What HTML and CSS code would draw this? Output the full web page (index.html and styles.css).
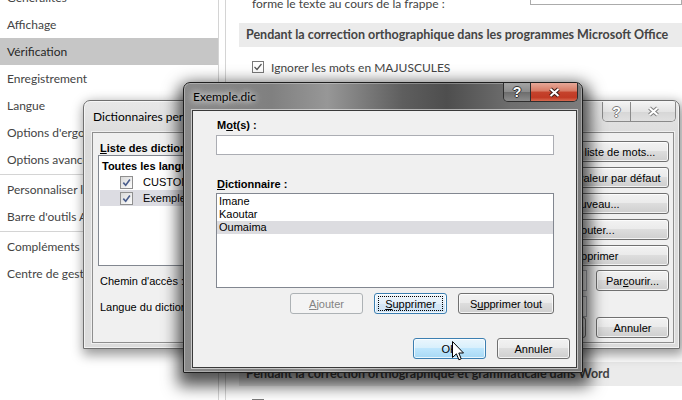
FILE: index.html
```html
<!DOCTYPE html>
<html lang="fr">
<head>
<meta charset="utf-8">
<title>Options Word – Exemple.dic</title>
<link rel="stylesheet" href="styles.css">
</head>
<body>
<div class="screen">
  <div class="options">
    <nav class="sidebar">
      <div class="nav-item">Généralités</div>
      <div class="nav-item">Affichage</div>
      <div class="nav-item selected">Vérification</div>
      <div class="nav-item">Enregistrement</div>
      <div class="nav-item">Langue</div>
      <div class="nav-item">Options d'ergonomie</div>
      <div class="nav-item">Options avancées</div>
      <div class="nav-sep"></div>
      <div class="nav-item">Personnaliser le ruban</div>
      <div class="nav-item">Barre d'outils Accès rapide</div>
      <div class="nav-sep"></div>
      <div class="nav-item">Compléments</div>
      <div class="nav-item">Centre de gestion de la confidentialité</div>
    </nav>
    <main class="content">
      <div class="top-row">
        <span class="top-label">forme le texte au cours de la frappe :</span>
        <div class="top-select"></div>
      </div>
      <div class="section">Pendant la correction orthographique dans les programmes Microsoft Office</div>
      <div class="opt"><span class="cb"><svg width="10" height="10" viewBox="0 0 10 10"><path d="M1.5 5 L4 7.5 L8.5 2" fill="none" stroke="#555" stroke-width="1.2"/></svg></span>Ignorer les mots en MAJUSCULES</div>
      <div class="section lower">Pendant la correction orthographique et grammaticale dans Word</div>
      <div class="opt last"><span class="cb"></span>Vérifier l'orthographe au cours de la frappe</div>
    </main>
  </div>

  <section class="win dict">
    <header class="titlebar">
      <span class="title">Dictionnaires personnels</span>
      <div class="tb-group">
        <span class="tb help"><span class="q">?</span></span>
        <span class="tb close"><svg width="15" height="11" viewBox="0 0 15 11"><path d="M3.5 2 L11.5 9 M11.5 2 L3.5 9" stroke="#808080" stroke-width="4"/><path d="M3.5 2 L11.5 9 M11.5 2 L3.5 9" stroke="#fff" stroke-width="2"/></svg></span>
      </div>
    </header>
    <div class="client dict-client">
      <div class="dict-main">
        <div class="dict-left">
          <div class="lbl b"><u>L</u>iste des dictionnaires :</div>
          <div class="listbox">
            <div class="lb-head">Toutes les langues :</div>
            <div class="lb-item"><span class="cb7"><svg width="11" height="11" viewBox="0 0 11 11"><path d="M2.3 5.6 L4.7 8.2 L8.9 2.6" fill="none" stroke="#4a5d8c" stroke-width="1.6"/></svg></span>CUSTOM.DIC</div>
            <div class="lb-item sel"><span class="cb7"><svg width="11" height="11" viewBox="0 0 11 11"><path d="M2.3 5.6 L4.7 8.2 L8.9 2.6" fill="none" stroke="#4a5d8c" stroke-width="1.6"/></svg></span>Exemple.dic</div>
          </div>
        </div>
        <div class="dict-buttons">
          <button class="btn">Modifier la liste de mots...</button>
          <button class="btn">Rétablir la valeur par défaut</button>
          <button class="btn">Nouveau...</button>
          <button class="btn">Ajouter...</button>
          <button class="btn">Supprimer</button>
        </div>
      </div>
      <div class="dict-row path-row">
        <span class="lbl">Chemin d'accès :</span>
        <div class="field grow"></div>
        <button class="btn">Par<u>c</u>ourir...</button>
      </div>
      <div class="dict-row lang-row">
        <span class="lbl">Lan<u>g</u>ue du dictionnaire :</span>
        <div class="field grow"></div>
      </div>
      <div class="dict-row actions">
        <button class="btn">OK</button>
        <button class="btn">Annuler</button>
      </div>
    </div>
  </section>

  <section class="win ex">
    <header class="titlebar">
      <span class="title">Exemple.dic</span>
      <div class="tb-group">
        <span class="tb help"><span class="q">?</span></span>
        <span class="tb close"><svg width="15" height="11" viewBox="0 0 15 11"><path d="M3.5 2 L11.5 9 M11.5 2 L3.5 9" stroke="#3b1d18" stroke-width="4"/><path d="M3.5 2 L11.5 9 M11.5 2 L3.5 9" stroke="#fff" stroke-width="2"/></svg></span>
      </div>
    </header>
    <div class="client ex-client">
      <div class="lbl b">M<u>o</u>t(s) :</div>
      <div class="field word"></div>
      <div class="lbl b dict-lbl"><u>D</u>ictionnaire :</div>
      <div class="ex-list">
        <div class="li">Imane</div>
        <div class="li">Kaoutar</div>
        <div class="li sel">Oumaima</div>
      </div>
      <div class="row-btns">
        <button class="btn disabled"><u>A</u>jouter</button>
        <button class="btn focus"><u>S</u>upprimer</button>
        <button class="btn wide">S<u>u</u>pprimer tout</button>
      </div>
      <div class="row-actions">
        <button class="btn hover">OK</button>
        <button class="btn">Annuler</button>
      </div>
    </div>
  </section>

  <svg class="cursor" width="13" height="20" viewBox="0 0 13 20"><path d="M0.5 0.5 V16.5 L4.4 12.8 L6.9 18.8 L9.2 17.8 L6.8 12 H11.5 Z" fill="#fff" stroke="#000" stroke-width="1" stroke-linejoin="miter"/></svg>
</div>
</body>
</html>
```
FILE: styles.css
```css
* { box-sizing: border-box; }
html, body { margin: 0; padding: 0; }
body { background: #fff; font-family: Lato, "Noto Sans", sans-serif; }
.screen { position: relative; width: 682px; height: 400px; overflow: hidden; background: #fff; }

/* Word options background window */
.options { display: flex; height: 400px; }
.sidebar { flex: none; width: 219px; border-right: 1px solid #d4d4d4; font-size: 12px; color: #444; }
.nav-item { height: 27px; line-height: 27px; padding-left: 7px; white-space: nowrap; overflow: hidden; }
.nav-item:first-child { margin-top: -16px; }
.nav-item.selected { background: #c6c6c6; color: #262626; }
.nav-sep { height: 1px; margin: 1px 0; background: #d4d4d4; }

.content { flex: 1; min-width: 0; margin-left: 6px; border-left: 1px solid #d4d4d4; display: flex; flex-direction: column; font-size: 12px; color: #444; overflow: hidden; }
.top-row { display: flex; align-items: center; height: 22px; margin-top: -8px; flex: none; }
.top-label { padding-left: 26px; white-space: nowrap; }
.top-select { margin-left: auto; align-self: flex-start; width: 152px; height: 13px; border: 1px solid #ababab; border-top: 0; background: #fff; }
.section { flex: none; margin: 9px 0 0 13px; height: 24px; line-height: 24px; padding-left: 7px; background: #ebebeb; font-weight: 700; font-size: 12.5px; color: #444; white-space: nowrap; }
.section.lower { margin-top: 286px; }
.opt { flex: none; display: flex; align-items: center; gap: 7px; height: 18px; margin-top: 11px; padding-left: 26px; white-space: nowrap; }
.opt.last { margin-top: 10px; }
.cb { width: 12px; height: 12px; border: 1px solid #7a7a7a; background: #fff; flex: none; display: flex; align-items: center; justify-content: center; }

/* generic dialog window */
.win { position: absolute; display: flex; flex-direction: column; border-radius: 7px 7px 0 0; }
.titlebar { display: flex; align-items: center; font-size: 12px; color: #000; flex: none; }
.title { white-space: nowrap; padding-left: 1px; }
.tb-group { margin-left: auto; align-self: flex-start; display: flex; border-radius: 0 0 5px 5px; overflow: hidden; }
.tb { display: flex; align-items: center; justify-content: center; }
.q { font: 700 14px "Liberation Sans", Arial, sans-serif; color: #fff; line-height: 14px; }

.dict { left: 83px; top: 100px; width: 597px; padding: 0 5px 5px 8px; border: 1px solid #6f6f6f;
  background: linear-gradient(#e8e8e8, #dadada 40px, #dcdcdc);
  box-shadow: 2px 4px 12px 2px rgba(0,0,0,.4), inset 0 0 0 1px rgba(255,255,255,.6); }
.dict .titlebar { height: 31px; }
.dict .tb-group { margin-top: 1px; margin-right: -2px; border: 1px solid #8a8a8a; border-top: 0; }
.dict .tb { height: 19px; background: linear-gradient(#f3f3f3, #e4e4e4 50%, #d6d6d6 51%, #e0e0e0); }
.dict .tb.help { width: 28px; border-right: 1px solid #8a8a8a; }
.dict .tb.close { width: 44px; }
.dict .q { text-shadow: 1px 0 #7d7d7d, -1px 0 #7d7d7d, 0 1px #7d7d7d, 0 -1px #7d7d7d; }

.client { background: #f0f0f0; border: 1px solid #8e8e8e; box-shadow: 0 0 0 1px rgba(255,255,255,.55); font: 11px "Liberation Sans", Arial, sans-serif; color: #000; }
.lbl { line-height: 14px; white-space: nowrap; }
.b { font-weight: 700; }

.dict-client { padding: 8px 4px 4px 5px; display: flex; flex-direction: column; }
.dict-main { display: flex; gap: 10px; }
.dict-left { flex: 1; min-width: 0; }
.dict-left .lbl { padding-left: 2px; }
.listbox { height: 111px; border: 1px solid #828790; background: #fff; padding: 2px 1px; }
.lb-head { font-weight: 700; line-height: 16px; padding-left: 2px; white-space: nowrap; }
.lb-item { display: flex; align-items: center; gap: 10px; height: 16px; padding-left: 20px; white-space: nowrap; }
.lb-item.sel { background: #dcdce2; }
.cb7 { flex: none; width: 13px; height: 13px; border: 1px solid #8f8f8f; background: linear-gradient(135deg, #d9d9d9, #fdfdfd); display: flex; align-items: center; justify-content: center; }
.dict-buttons { flex: none; width: 152px; display: flex; flex-direction: column; gap: 5px; }
.dict-buttons .btn { width: 100%; }
.dict-row { display: flex; align-items: center; height: 21px; }
.path-row { margin-top: 4px; }
.lang-row { margin-top: 5px; }
.grow { flex: 1; }
.field { height: 21px; border: 1px solid #abadb3; background: #fff; }
.path-row .lbl, .lang-row .lbl { padding-left: 2px; }
.path-row .field { margin: 0 9px 0 10px; }
.lang-row .field { margin: 0 82px 0 10px; }
.actions { justify-content: flex-end; gap: 10px; }

/* front dialog */
.ex { left: 183px; top: 82px; width: 400px; padding: 0 5px 4px 8px; border: 1px solid #1e1e1e;
  background: linear-gradient(90deg, #8a8a8a 0%, #808080 22%, #979797 36%, #5e5e5e 55%, #4e4e4e 66%, #6e6e6e 82%, #7c7c7c 100%);
  box-shadow: 1px 7px 16px 6px rgba(0,0,0,.68), inset 0 0 0 1px rgba(255,255,255,.3); }
.ex .titlebar { height: 27px; }
.ex .title { text-shadow: 0 0 6px #fff, 0 0 10px rgba(255,255,255,.8); }
.ex .tb-group { margin-right: -1px; border: 1px solid #2e2e2e; border-top: 0; }
.ex .tb { height: 18px; }
.ex .tb.help { width: 27px; border-right: 1px solid #2e2e2e; background: linear-gradient(#a4a4a4, #8a8a8a 50%, #6c6c6c 51%, #8c8c8c); }
.ex .tb.close { width: 46px; background: linear-gradient(#e6a898, #d77a64 45%, #c5432c 50%, #c13a24 80%, #d86a50); }
.ex .q { text-shadow: 1px 0 #333, -1px 0 #333, 0 1px #333, 0 -1px #333; }
.ex .client { border-color: #3a3a3a; }

.ex-client { padding: 7px 6px 8px 23px; display: flex; flex-direction: column; }
.ex-client .lbl { padding-left: 1px; }
.field.word { width: 338px; height: 20px; margin-top: 3px; }
.dict-lbl { margin-top: 22px; }
.ex-list { width: 338px; height: 95px; margin-top: 2px; border: 1px solid #828790; background: #fff; padding-top: 1px; }
.li { height: 13px; line-height: 13px; padding-left: 2px; }
.li.sel { background: #dcdce0; }
.row-btns { width: 338px; display: flex; justify-content: flex-end; gap: 11px; margin-top: 5px; }
.row-btns .wide { width: 96px; }
.row-actions { display: flex; justify-content: flex-end; gap: 11px; margin-top: 24px; }

/* buttons */
.btn { flex: none; width: 73px; height: 21px; padding: 0; margin: 0; border: 1px solid #707070; border-radius: 3px;
  background: linear-gradient(#f2f2f2, #ebebeb 45%, #dddddd 50%, #cfcfcf);
  box-shadow: inset 0 0 0 1px rgba(255,255,255,.75); font: inherit; color: #000;
  display: flex; align-items: center; justify-content: center; white-space: nowrap; position: relative; overflow: hidden; }
.btn.disabled { border-color: #adb2b5; background: #f4f4f4; color: #838383; box-shadow: none; }
.btn.focus { border-color: #3c7fb1; background: linear-gradient(#eef6fc, #e3eff9 50%, #d5e7f6 51%, #cfe3f4); }
.btn.focus::after { content: ""; position: absolute; top: 2px; bottom: 2px; left: 3px; right: 3px; border: 1px dotted #000; }
.btn.hover { border-color: #3c7fb1; background: linear-gradient(#eaf6fd, #d9f0fc 45%, #bee6fd 50%, #a7d9f5); }

.cursor { position: absolute; left: 452px; top: 341px; z-index: 10; }
```
